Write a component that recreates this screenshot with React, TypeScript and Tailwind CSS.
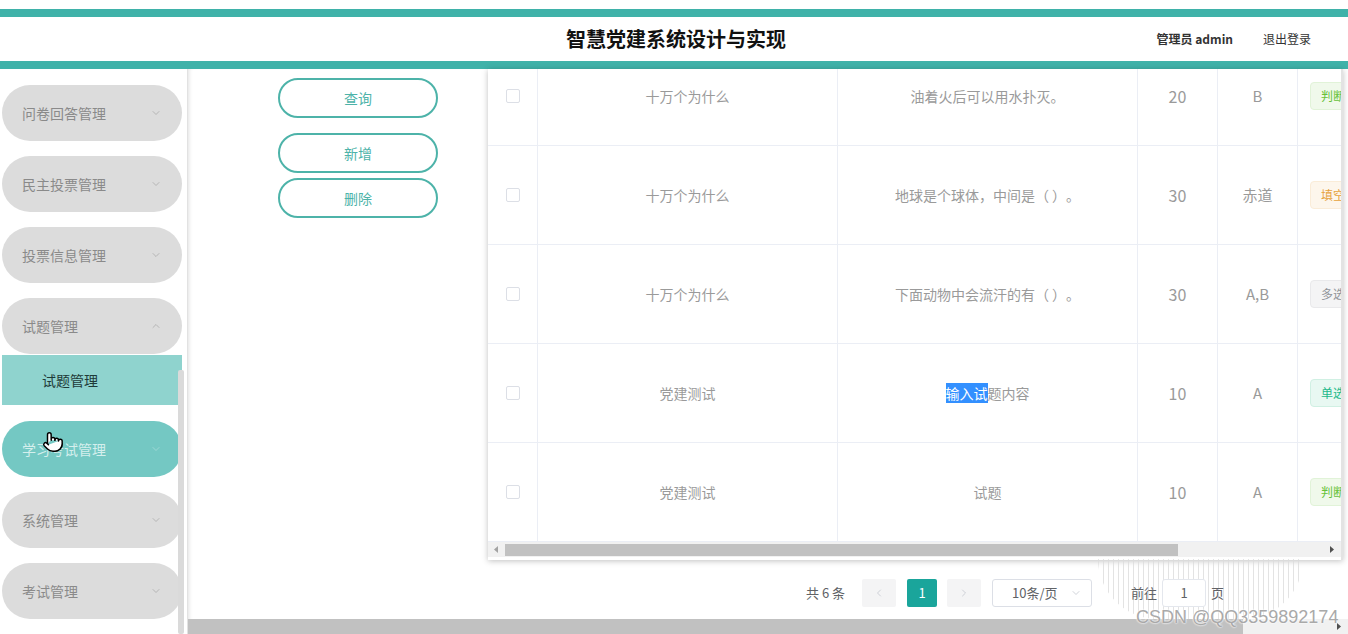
import React from "react";
import { ChevronDown, ChevronUp, ChevronLeft, ChevronRight, Pointer } from "lucide-react";

const FONT = { fontFamily: '"Noto Sans CJK SC", "Noto Sans", sans-serif' };

type Tag = { text: string; cls: string };
const rows: { cat: string; q: React.ReactNode; score: string; ans: string; tag: Tag }[] = [
  { cat: "十万个为什么", q: "油着火后可以用水扑灭。", score: "20", ans: "B", tag: { text: "判断题", cls: "bg-[#f0f9eb] border-[#e1f3d8] text-[#67c23a]" } },
  { cat: "十万个为什么", q: "地球是个球体，中间是（ ）。", score: "30", ans: "赤道", tag: { text: "填空题", cls: "bg-[#fdf6ec] border-[#faecd8] text-[#e6a23c]" } },
  { cat: "十万个为什么", q: "下面动物中会流汗的有（ ）。", score: "30", ans: "A,B", tag: { text: "多选题", cls: "bg-[#f4f4f5] border-[#e9e9eb] text-[#909399]" } },
  {
    cat: "党建测试",
    q: (
      <span>
        <span className="bg-[#3390ff] text-white">输入试</span>题内容
      </span>
    ),
    score: "10",
    ans: "A",
    tag: { text: "单选题", cls: "bg-[#e8f8f2] border-[#d0f0e3] text-[#1db98a]" },
  },
  { cat: "党建测试", q: "试题", score: "10", ans: "A", tag: { text: "判断题", cls: "bg-[#f0f9eb] border-[#e1f3d8] text-[#67c23a]" } },
];

function Pill({ label, open, hover }: { label: string; open?: boolean; hover?: boolean }) {
  return (
    <div
      className={`relative flex items-center justify-between w-[180px] h-[56px] ml-[2px] rounded-full pl-[20px] pr-[20px] text-[14px] ${
        hover ? "bg-[#74c8c3] text-[#d4efed]" : "bg-[#dcdcdc] text-[#8a8a8a]"
      }`}
    >
      <span>{label}</span>
      {open ? (
        <ChevronUp size={12} strokeWidth={1.5} className="text-[#a8a8a8]" />
      ) : (
        <ChevronDown size={12} strokeWidth={1.5} className={hover ? "text-[#a9dcd9]" : "text-[#a8a8a8]"} />
      )}
      {hover && (
        <Pointer
          size={22}
          strokeWidth={1.6}
          className="absolute left-[40px] top-[10px] text-black fill-white"
        />
      )}
    </div>
  );
}

function OutlineBtn({ label }: { label: string }) {
  return (
    <div className="w-[160px] h-[40px] rounded-full border-2 border-[#4db3a9] bg-white flex items-center justify-center text-[14px] text-[#4db3a9]">
      {label}
    </div>
  );
}

export default function App() {
  return (
    <div className="w-[1348px] h-[634px] overflow-hidden bg-white relative flex flex-col [text-spacing-trim:space-all]" style={FONT}>
      {/* header */}
      <div className="h-[9px] bg-white" />
      <div className="h-[8px] bg-[#3fb2a9]" />
      <div className="h-[44px] grid grid-cols-[1fr_auto_1fr] items-center bg-white">
        <div />
        <div className="text-[20px] font-bold text-[#111] pl-[4px]">智慧党建系统设计与实现</div>
        <div className="flex justify-end items-center pr-[37px] gap-[30px] text-[12px] text-[#333]">
          <span className="font-bold">管理员 admin</span>
          <span>退出登录</span>
        </div>
      </div>
      <div className="h-[8px] bg-[#3fb2a9]" />

      {/* body */}
      <div className="flex flex-1 min-h-0">
        {/* sidebar */}
        <div className="relative w-[187px] shrink-0 bg-white pt-[16px] flex flex-col">
          <div className="flex flex-col gap-[15px]">
            <Pill label="问卷回答管理" />
            <Pill label="民主投票管理" />
            <Pill label="投票信息管理" />
            <div className="flex flex-col">
              <Pill label="试题管理" open />
              <div className="w-[180px] ml-[2px] mt-[1px] h-[50px] bg-[#8fd3ce] flex items-center pl-[40px] text-[14px] text-[#1e3a38]">
                试题管理
              </div>
            </div>
            <div className="mt-[1px]">
              <Pill label="学习考试管理" hover />
            </div>
            <Pill label="系统管理" />
            <Pill label="考试管理" />
          </div>
          <div className="absolute left-[178px] top-[301px] bottom-0 w-[6px] bg-[#dadada] rounded-[2px]" />
        </div>

        {/* main */}
        <div className="flex-1 min-w-0 flex flex-col border-l border-[#e2e2e2] shadow-[inset_4px_0_4px_-3px_rgba(0,0,0,0.12)] relative">
          <div className="flex">
            <div className="w-[300px] shrink-0 pl-[90px] pt-[9px] flex flex-col">
              <OutlineBtn label="查询" />
              <div className="mt-[15px]">
                <OutlineBtn label="新增" />
              </div>
              <div className="mt-[5px]">
                <OutlineBtn label="删除" />
              </div>
            </div>

            {/* table card */}
            <div className="w-[855px] h-[491px] bg-white shadow-[0_1px_6px_rgba(0,0,0,0.25)] flex flex-col border-r-[2px] border-[#e3e3e3]">
              <div className="h-[473px] overflow-hidden">
                <div className="-mt-[22px]">
                  {rows.map((r, i) => (
                    <div key={i} className="flex h-[99px] border-b border-[#ebeef5] text-[14px] text-[#9a9a9a]">
                      <div className="w-[50px] shrink-0 flex items-center justify-center border-r border-[#ebeef5]">
                        <div className="w-[14px] h-[14px] border border-[#dcdfe6] rounded-[2px] bg-white" />
                      </div>
                      <div className="w-[300px] shrink-0 flex items-center justify-center border-r border-[#ebeef5]">
                        {r.cat}
                      </div>
                      <div className="w-[300px] shrink-0 flex items-center justify-center border-r border-[#ebeef5] whitespace-pre">
                        {r.q}
                      </div>
                      <div className="w-[80px] shrink-0 flex items-center justify-center border-r border-[#ebeef5] text-[16px]">
                        {r.score}
                      </div>
                      <div className="w-[80px] shrink-0 flex items-center justify-center border-r border-[#ebeef5] text-[15px]">
                        {r.ans}
                      </div>
                      <div className="flex-1 min-w-0 overflow-hidden flex items-center pl-[12px]">
                        <div className={`shrink-0 h-[28px] px-[10px] flex items-center border rounded-[4px] text-[12px] ${r.tag.cls}`}>
                          {r.tag.text}
                        </div>
                      </div>
                    </div>
                  ))}
                </div>
              </div>
              <div className="h-[15px] bg-[#f1f1f1] flex items-center">
                <div className="w-[17px] flex items-center justify-center text-[#a0a0a0]">
                  <svg width="5" height="7" viewBox="0 0 5 7"><path d="M4 0 L0 3.5 L4 7 Z" fill="#a3a3a3" /></svg>
                </div>
                <div className="w-[673px] h-[12px] bg-[#c1c1c1]" />
                <div className="flex-1" />
                <div className="w-[17px] flex items-center justify-center">
                  <svg width="5" height="7" viewBox="0 0 5 7"><path d="M0 0 L4 3.5 L0 7 Z" fill="#505050" /></svg>
                </div>
              </div>
            </div>
          </div>

          {/* decorative stripes */}
          <div className="absolute left-[910px] top-[490px] w-[205px] h-[60px] rounded-b-full bg-[repeating-linear-gradient(90deg,#dcdcdc_0px,#dcdcdc_1px,transparent_1px,transparent_5px)] opacity-80" />

          {/* pagination */}
          <div className="relative flex items-center h-[28px] mt-[19px] ml-[618px] text-[13px] text-[#606266]">
            <span className="mr-[17px]">共 6 条</span>
            <div className="w-[34px] h-[28px] bg-[#f4f4f5] rounded-[2px] flex items-center justify-center text-[#c0c4cc]">
              <ChevronLeft size={12} strokeWidth={1.5} />
            </div>
            <div className="ml-[11px] w-[30px] h-[28px] bg-[#1aa59b] rounded-[2px] flex items-center justify-center text-white text-[13px]">
              1
            </div>
            <div className="ml-[10px] w-[34px] h-[28px] bg-[#f4f4f5] rounded-[2px] flex items-center justify-center text-[#c0c4cc]">
              <ChevronRight size={12} strokeWidth={1.5} />
            </div>
            <div className="ml-[11px] w-[100px] h-[28px] border border-[#dcdfe6] rounded-[3px] bg-white flex items-center justify-between pl-[19px] pr-[9px]">
              <span>10条/页</span>
              <ChevronDown size={12} strokeWidth={1.5} className="text-[#c0c4cc]" />
            </div>
            <span className="ml-[39px]">前往</span>
            <div className="ml-[5px] w-[44px] h-[28px] border border-[#e4e7ed] rounded-[3px] bg-white flex items-center justify-center">
              1
            </div>
            <span className="ml-[5px]">页</span>
          </div>

          {/* page horizontal scrollbar */}
          <div className="mt-auto h-[15px] bg-[#f1f1f1] flex items-center">
            <div className="w-[1055px] h-[15px] bg-[#c1c1c1]" />
            <div className="flex-1" />
            <div className="w-[17px] flex items-center justify-center">
              <svg width="5" height="7" viewBox="0 0 5 7"><path d="M0 0 L4 3.5 L0 7 Z" fill="#505050" /></svg>
            </div>
          </div>

          {/* watermark */}
          <div
            className="absolute left-[948px] top-[535px] whitespace-nowrap text-[18px] text-[#a9a9a9]"
            style={{ fontFamily: '"Liberation Sans", sans-serif', textShadow: "0 0 2px #fff, 0 0 2px #fff" }}
          >
            CSDN @QQ3359892174
          </div>
        </div>
      </div>
    </div>
  );
}
